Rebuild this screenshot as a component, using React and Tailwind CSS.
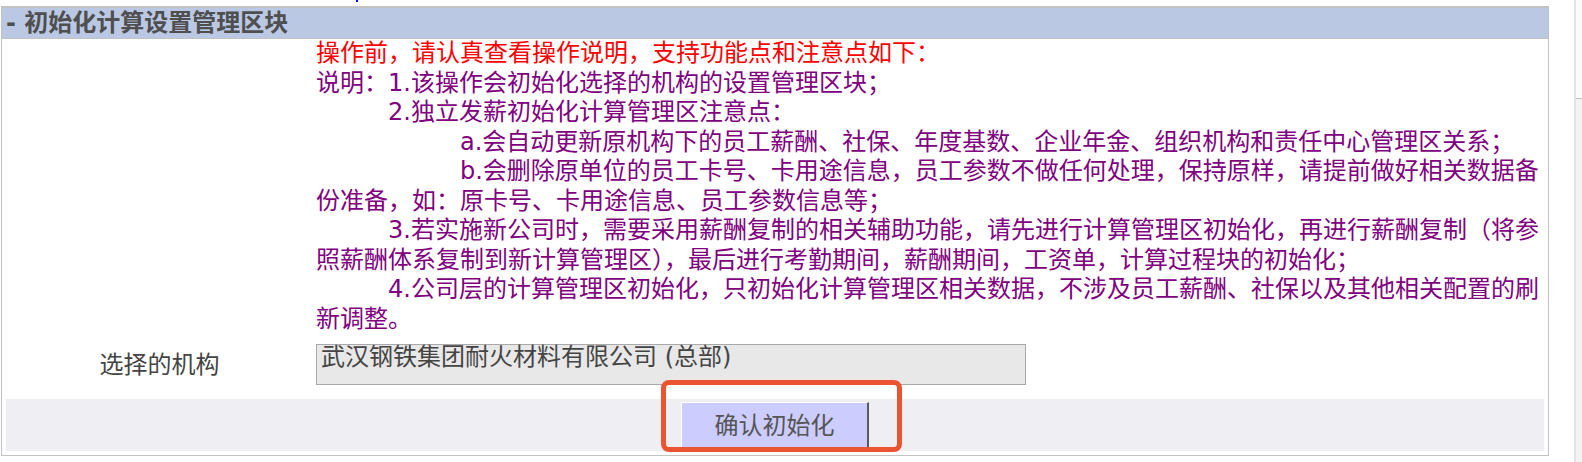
export default function App() {
  const body = "font-['DejaVu_Sans','Noto_Sans_CJK_SC',sans-serif]";

  return (
    <div className={`flex h-[462px] w-[1582px] bg-white overflow-hidden ${body}`}>
      <div className="flex flex-col">
        {/* stray link mark above the panel */}
        <div className="h-[6px]">
          <div className="ml-[356px] h-[2px] w-[2px] bg-[#0000ff]" />
        </div>

        {/* Panel */}
        <div className="ml-[1px] w-[1548px] border border-t-2 border-[#c2c2c2]">
          <div className="h-[31px] border-b border-[#c2c2c2] bg-[#bac8e4] pl-[4px] text-[24px] leading-[31px] font-semibold text-[#4f4f4f]">
            - 初始化计算设置管理区块
          </div>

          <div className="px-[4px] pb-[4px]">
            <div className="grid grid-cols-[307px_1fr] gap-x-[3px]">
              <div />
              <div className="text-[24px] leading-[29.5px] text-[#800080]">
                <div className="text-[#ff0000]">操作前，请认真查看操作说明，支持功能点和注意点如下：</div>
                <div>说明：1.该操作会初始化选择的机构的设置管理区块；</div>
                <div className="indent-[72px]">2.独立发薪初始化计算管理区注意点：</div>
                <div className="indent-[144px]">
                  a.会自动更新原机构下的员工薪酬、社保、年度基数、企业年金、组织机构和责任中心管理区关系；
                </div>
                <div className="indent-[144px]">
                  b.会删除原单位的员工卡号、卡用途信息，员工参数不做任何处理，保持原样，请提前做好相关数据备份准备，如：原卡号、卡用途信息、员工参数信息等；
                </div>
                <div className="indent-[72px]">
                  3.若实施新公司时，需要采用薪酬复制的相关辅助功能，请先进行计算管理区初始化，再进行薪酬复制（将参照薪酬体系复制到新计算管理区），最后进行考勤期间，薪酬期间，工资单，计算过程块的初始化；
                </div>
                <div className="indent-[72px]">
                  4.公司层的计算管理区初始化，只初始化计算管理区相关数据，不涉及员工薪酬、社保以及其他相关配置的刷新调整。
                </div>
              </div>

              <div className="mt-[10px] flex items-center justify-center text-[24px] text-[#444]">
                选择的机构
              </div>
              <div className="mt-[10px]">
                <div className="h-[41px] w-[710px] border border-[#a9a9a9] bg-[#e8e8e8] pl-[4px] pt-[1px] text-[24px] leading-[22px] text-[#444]">
                  武汉钢铁集团耐火材料有限公司 (总部)
                </div>
              </div>
            </div>

            {/* Action bar */}
            <div className="mt-[14px] flex h-[52px] justify-center bg-[#efeef3] pt-[3px]">
              <div className="relative">
                <button className="h-[48px] w-[188px] border-t border-l border-r-2 border-b-2 border-t-white border-l-white border-r-[#5a5a5a] border-b-[#5a5a5a] bg-[#ccccff] text-[24px] text-[#555]">
                  确认初始化
                </button>
                <span className="pointer-events-none absolute -left-[20px] -top-[22px] -right-[33px] -bottom-[1px] rounded-[8px] border-[5px] border-[#ea5430]" />
              </div>
            </div>
          </div>
        </div>
      </div>

      <div className="flex-1" />

      {/* Scrollbar */}
      <div className="flex h-[462px] w-[8px] flex-col border-l-2 border-[#e3e3e3] bg-[#f3f3f3]">
        <div className="h-[99px] border-b border-[#c4c4c4] bg-[#fbfbfb]" />
      </div>
    </div>
  );
}
